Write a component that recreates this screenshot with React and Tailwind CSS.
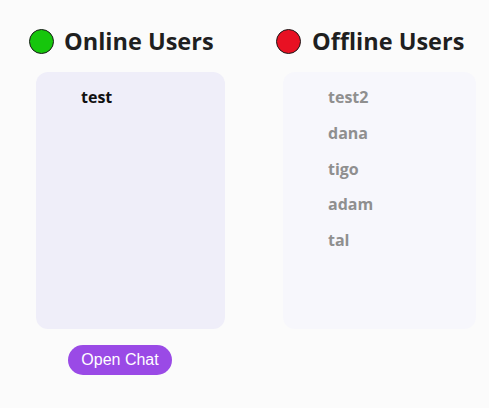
import React from 'react';

const offline = ['test2', 'dana', 'tigo', 'adam', 'tal'];

const Dot = ({ color }) => (
    <span className={`inline-block w-[25px] h-[25px] rounded-full border-[1.5px] border-[#1a1a1a] ${color}`} />
);

export default function App() {
    return (
        <div className="w-[489px] h-[408px] bg-[#fbfbfb] flex font-['Open_Sans',sans-serif] pt-[29px]">
            {/* Online column */}
            <div className="pl-[29px] w-[276px] flex flex-col">
                <div className="flex items-center gap-[10px] h-[25px]">
                    <Dot color="bg-[#16c60c]" />
                    <span className="text-[23.5px] font-bold text-[#1f1f1f] leading-none">Online Users</span>
                </div>
                <div className="ml-[7px] mt-[18px] w-[189px] h-[257px] rounded-[12px] bg-[#efeef9] pl-[45px] pt-[15px]">
                    <div className="text-[16px] font-bold text-[#111] leading-[20px]">test</div>
                </div>
                <button className="ml-[39px] mt-[16px] w-[104px] h-[30px] rounded-full bg-[#9a4ae6] text-white text-[16px] font-['Liberation_Sans',Arial,sans-serif]">
                    Open Chat
                </button>
            </div>
            {/* Offline column */}
            <div className="flex flex-col">
                <div className="flex items-center gap-[11px] h-[25px]">
                    <Dot color="bg-[#e81123]" />
                    <span className="text-[23.5px] font-bold text-[#1f1f1f] leading-none">Offline Users</span>
                </div>
                <div className="ml-[7px] mt-[18px] w-[193px] h-[257px] rounded-[12px] bg-[#f7f7fc] pl-[45px] pt-[15px] flex flex-col gap-[15.75px]">
                    {offline.map(u => (
                        <div key={u} className="text-[16px] font-bold text-[#8f8f8f] leading-[20px]">{u}</div>
                    ))}
                </div>
            </div>
        </div>
    );
}
